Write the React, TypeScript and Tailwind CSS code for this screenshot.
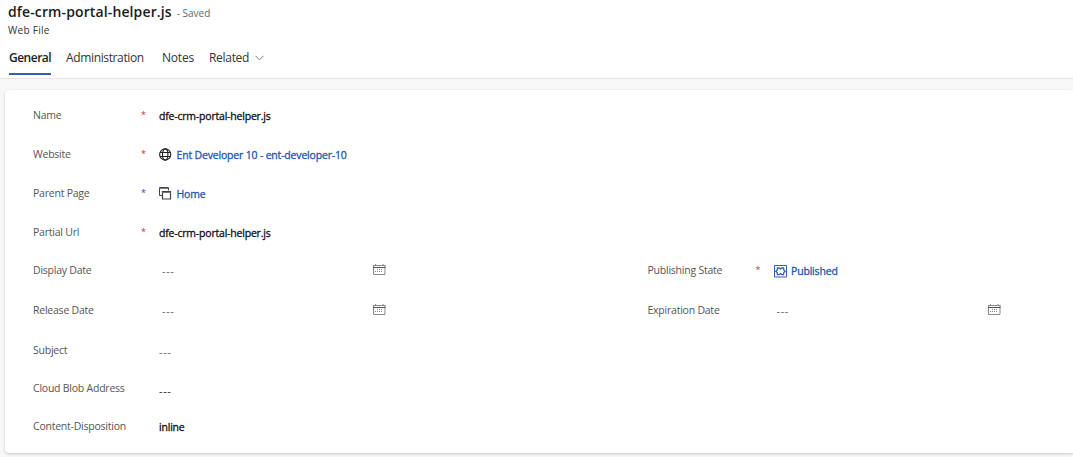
import type { ReactNode } from "react";

function Globe() {
  return (
    <svg className="h-[13px] w-[13px] shrink-0" viewBox="0 0 13 13" fill="none" stroke="#222" strokeWidth="1.1">
      <circle cx="6.2" cy="6.5" r="5.6" />
      <ellipse cx="6.2" cy="6.5" rx="2.7" ry="5.6" />
      <path d="M1.1 4.5h10.2M1.1 8.5h10.2" />
    </svg>
  );
}

function Pages() {
  return (
    <svg className="h-[13px] w-[13px] shrink-0" viewBox="0 0 13 13" fill="none" stroke="#444" strokeWidth="1">
      <path d="M3.5 8.5h-3v-8h9v3" />
      <path d="M0.5 1.5h9" stroke="#777" />
      <path d="M3.5 4.5h8v7.5h-8z" strokeWidth="1.2" />
      <path d="M3.5 5.5h8" stroke="#777" />
    </svg>
  );
}

function Status() {
  return (
    <svg className="h-[13px] w-[13px] shrink-0" viewBox="0 0 13 13" fill="none" stroke="#2f5fb5" strokeWidth="1">
      <path d="M0.5 0.5h12v11.5h-12z" />
      <path d="M3.5 3h1.7l1.3 1 1.3-1h1.7l.4 2.2 1.3 1.1-1.3 1.1-.4 2.2H7.8l-1.3-1-1.3 1H3.5l-.4-2.2-1.3-1.1 1.3-1.1z" strokeWidth="1.3" />
    </svg>
  );
}

function CalendarIcon() {
  return (
    <svg className="h-[12px] w-[13px] shrink-0" viewBox="0 0 13 12" fill="none">
      <path d="M0.5 1v9.5h11.5v-9.5" stroke="#888" />
      <path d="M0 1.5h12.5" stroke="#888" />
      <path d="M0 3.5h12.5" stroke="#555" />
      <path d="M2.5 0v2M10 0v2" stroke="#888" />
      <path d="M4 5.5h6M2 7.5h8" stroke="#888" strokeDasharray="1 1" />
    </svg>
  );
}

type FieldProps = {
  label: string;
  star?: "red" | "blue";
  calendar?: boolean;
  children: ReactNode;
};

function Field({ label, star, calendar, children }: FieldProps) {
  return (
    <div className="flex h-full w-[614.5px] shrink-0 items-center">
      <div className="w-[108px] whitespace-nowrap text-[10.5px] tracking-[-0.23px] text-[#555]">{label}</div>
      <div className={`-mt-[2px] w-[18px] text-[9px] leading-[12px] ${star === "blue" ? "text-[#3434d8]" : "text-[#d02e2e]"}`}>
        {star ? "*" : ""}
      </div>
      <div className="flex w-[214px] items-center whitespace-nowrap">{children}</div>
      {calendar && <div className="-mt-[2px]"><CalendarIcon /></div>}
    </div>
  );
}

function Value({ children }: { children: ReactNode }) {
  return <span className="mt-[3px] text-[10.5px] tracking-[-0.2px] text-[#111] [-webkit-text-stroke:0.3px_#111]">{children}</span>;
}

function LinkValue({ icon, children }: { icon: ReactNode; children: ReactNode }) {
  return (
    <span className="mt-px flex items-center gap-[4.5px] text-[10.5px] tracking-[-0.18px] text-[#2456b0] [-webkit-text-stroke:0.3px_#2456b0]">
      <span className="-mt-px">{icon}</span>
      <span className="mt-px">{children}</span>
    </span>
  );
}

function Empty({ inset, dark }: { inset?: boolean; dark?: boolean }) {
  return (
    <span className={`text-[11px] tracking-[0.6px] ${inset ? "ml-[3px] mt-px" : "mt-[4px]"} ${dark ? "text-[#222]" : "text-[#666]"}`}>
      ---
    </span>
  );
}

export default function App() {
  return (
    <div className="flex h-[457px] w-[1073px] flex-col overflow-hidden bg-[#f8f8f8] font-['Open_Sans','Noto_Sans',sans-serif]">
      <header className="flex h-[79px] shrink-0 flex-col border-b border-[#e4e4e8] bg-white pl-[8px]">
        <div className="flex h-[24px] items-center whitespace-nowrap">
          <h1 className="text-[14px] font-semibold leading-[20px] tracking-[0.12px] text-[#1c1c1c]">dfe-crm-portal-helper.js</h1>
          <span className="ml-[5px] mt-[3px] text-[10px] text-[#666]">- Saved</span>
        </div>
        <div className="h-[12px] text-[10px] leading-[12px] tracking-[0.3px] text-[#333]">Web File</div>
        <nav className="ml-px mt-[11px] flex h-[28px] items-start gap-[15px] whitespace-nowrap text-[12px] leading-[21px] text-[#333]">
          <div className="h-[28px] w-[42px] border-b-2 border-[#2f62b5] font-semibold tracking-[-0.5px] text-[#1c1c1c]">General</div>
          <div className="w-[81px] tracking-[-0.36px]">Administration</div>
          <div className="w-[32px] tracking-[-0.2px]">Notes</div>
          <div className="flex items-center gap-[6px]">
            <span className="tracking-[-0.3px]">Related</span>
            <svg className="h-[6px] w-[9px]" viewBox="0 0 9 6" fill="none" stroke="#666" strokeWidth="0.9">
              <path d="M0.5 0.8l4 4 4-4" />
            </svg>
          </div>
        </nav>
      </header>
      <main className="ml-[5px] mt-[11px] grid h-[363px] shrink-0 grid-rows-[39px_39px_39px_39px_38px_41px_39px_38px_37px] rounded-l-[4px] bg-white pl-[28px] pt-[6px] shadow-[0_1px_3px_rgba(0,0,0,0.2)]">
        <Field label="Name" star="red"><Value>dfe-crm-portal-helper.js</Value></Field>
        <Field label="Website" star="red">
          <LinkValue icon={<Globe />}>Ent Developer 10 - ent-developer-10</LinkValue>
        </Field>
        <Field label="Parent Page" star="blue"><LinkValue icon={<Pages />}>Home</LinkValue></Field>
        <Field label="Partial Url" star="red"><Value>dfe-crm-portal-helper.js</Value></Field>
        <div className="flex items-center">
          <Field label="Display Date" calendar><Empty inset /></Field>
          <Field label="Publishing State" star="red"><LinkValue icon={<Status />}>Published</LinkValue></Field>
        </div>
        <div className="flex items-center">
          <Field label="Release Date" calendar><Empty inset /></Field>
          <Field label="Expiration Date" calendar><Empty inset /></Field>
        </div>
        <Field label="Subject"><Empty /></Field>
        <Field label="Cloud Blob Address"><Empty dark /></Field>
        <Field label="Content-Disposition"><Value>inline</Value></Field>
      </main>
    </div>
  );
}
